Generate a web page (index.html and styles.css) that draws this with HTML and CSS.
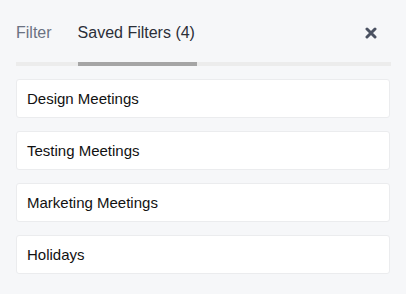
FILE: index.html
```html
<!DOCTYPE html>
<html>
<head>
<meta charset="utf-8">
<link rel="stylesheet" href="styles.css">
</head>
<body>
<div class="panel">
  <div class="header">
    <div class="tabs">
      <div class="tab">Filter</div>
      <div class="tab active">Saved Filters (4)</div>
    </div>
    <button class="close" aria-label="Close">
      <svg width="12" height="12" viewBox="0 0 12 12"><path d="M2 2 L10 10 M10 2 L2 10" stroke="#4b5262" stroke-width="3" stroke-linecap="round"/></svg>
    </button>
  </div>
  <div class="track"><div class="indicator"></div></div>
  <ul class="list">
    <li class="item">Design Meetings</li>
    <li class="item">Testing Meetings</li>
    <li class="item">Marketing Meetings</li>
    <li class="item">Holidays</li>
  </ul>
</div>
</body>
</html>
```
FILE: styles.css
```css
html, body {
  margin: 0;
  padding: 0;
  background: #f6f7f9;
  font-family: "Liberation Sans", Arial, sans-serif;
}
.panel {
  padding: 0 15px 0 16px;
}
.header {
  display: flex;
  align-items: center;
  justify-content: space-between;
  height: 62px;
  padding-top: 4px;
  box-sizing: border-box;
}
.tabs {
  display: flex;
  gap: 26px;
}
.tab {
  font-size: 16px;
  color: #6b7282;
  line-height: 20px;
}
.tab.active {
  color: #2b2f38;
}
.close {
  border: 0;
  background: none;
  padding: 0;
  margin-right: 14px;
  width: 12px;
  height: 12px;
  display: flex;
}
.track {
  height: 4px;
  background: #ececec;
}
.indicator {
  margin-left: 62px;
  width: 119px;
  height: 4px;
  background: #a5a5a5;
}
.list {
  list-style: none;
  margin: 13px 1px 0 0;
  padding: 0;
  display: flex;
  flex-direction: column;
  gap: 13px;
}
.item {
  background: #fff;
  border: 1px solid #ebecee;
  border-radius: 3px;
  height: 39px;
  box-sizing: border-box;
  padding: 0 10px;
  display: flex;
  align-items: center;
  font-size: 15px;
  color: #111;
}
```
